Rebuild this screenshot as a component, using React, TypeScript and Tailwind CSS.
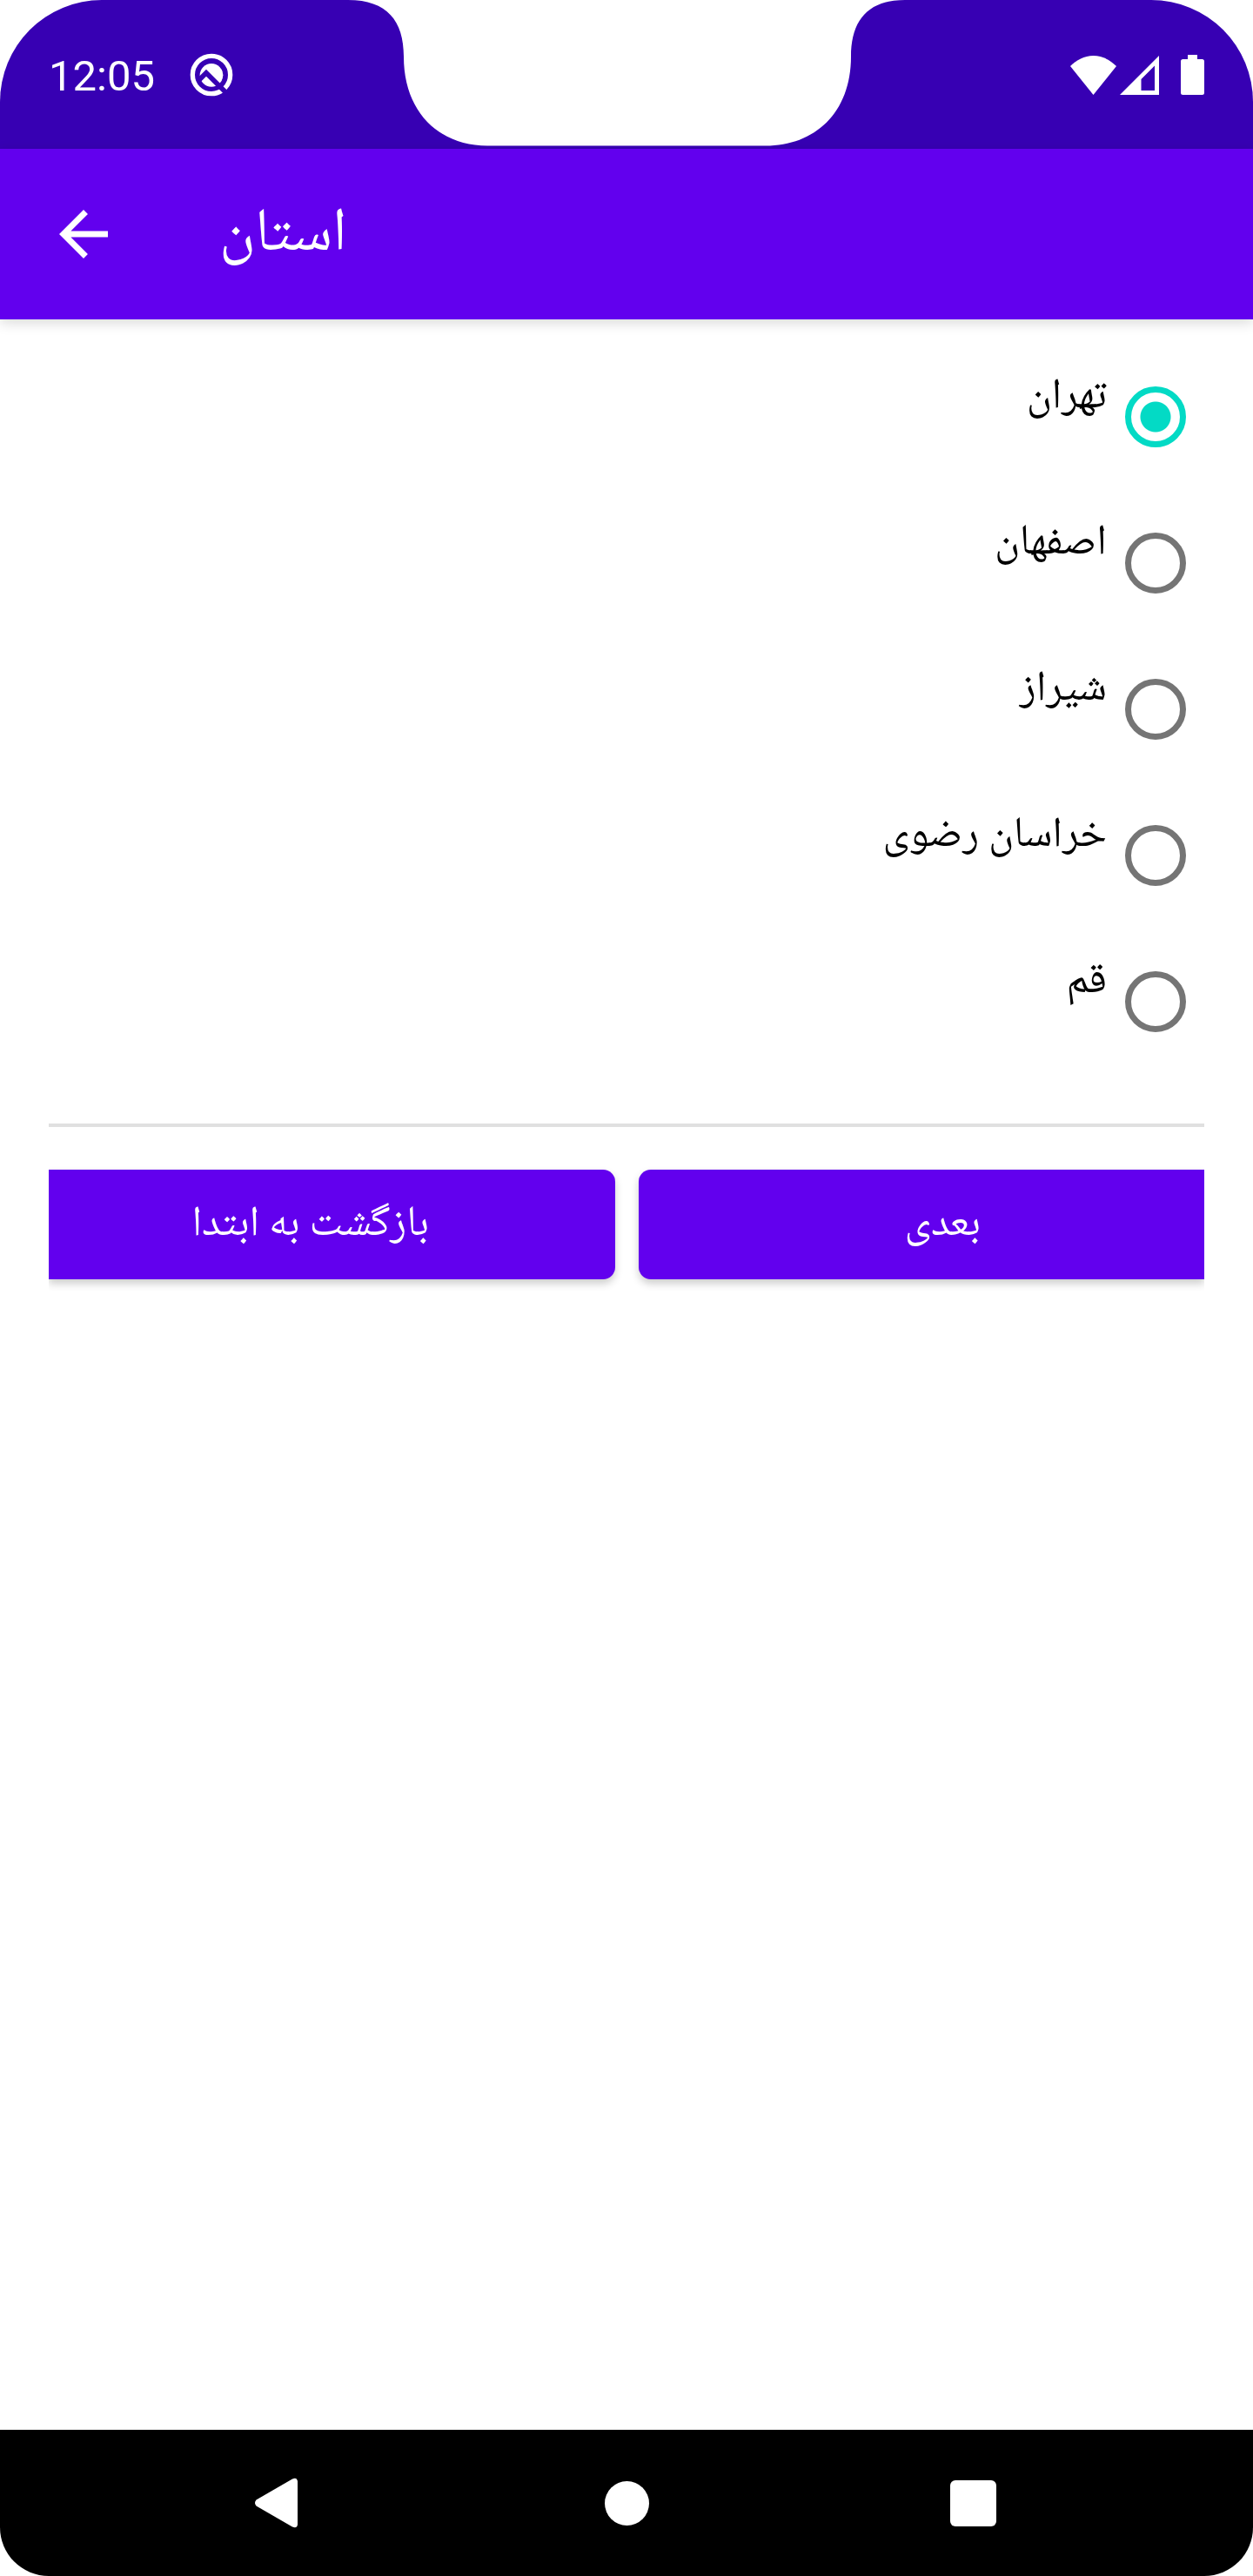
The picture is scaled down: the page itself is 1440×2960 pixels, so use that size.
import { useState } from 'react';

const PROVINCES = ['تهران', 'اصفهان', 'شیراز', 'خراسان رضوی', 'قم'];

function DebugIcon() {
  return (
    <svg className="size-[50px]" viewBox="0 0 150 150" fill="none" aria-hidden="true">
      <circle cx="75" cy="75" r="65" stroke="#fff" strokeWidth="16" />
      <circle cx="75" cy="76" r="40" fill="#fff" />
      <path d="M30 95 57 68 130 141" stroke="#3700b3" strokeWidth="17" />
    </svg>
  );
}

function StatusIcons() {
  return (
    <div className="flex items-end">
      <svg className="h-[45px] w-[53px]" viewBox="0 0 53 45" fill="#fff" aria-hidden="true">
        <path d="M0 12C7 5 16 0 26.500 0S46 5 53 12L26.500 45Z" />
      </svg>
      <svg className="ml-[4px] h-[45px] w-[45px]" viewBox="0 0 45 45" fill="#fff" aria-hidden="true">
        <path fillRule="evenodd" d="M0 45 45 0V45ZM24.500 27V40H40V11.500Z" />
      </svg>
      <svg className="ml-[25px] h-[46px] w-[27px]" viewBox="0 0 27 46" fill="#fff" aria-hidden="true">
        <path d="M8 0H19V5H24.500Q27 5 27 7.500V43.500Q27 46 24.500 46H2.500Q0 46 0 43.500V7.500Q0 5 2.500 5H8Z" />
      </svg>
    </div>
  );
}

function StatusBar() {
  return (
    <div className="relative flex h-[171px] items-center justify-between rounded-t-[117px] bg-[#3700b3] px-[56px]">
      <div className="flex items-center gap-[40px]">
        <span className="pt-[4px] font-['Roboto',sans-serif] text-[49px] leading-[56px] text-white">12:05</span>
        <DebugIcon />
      </div>
      <svg
        className="absolute top-0 left-1/2 h-[168px] w-[640px] -translate-x-1/2"
        viewBox="0 0 640 168"
        fill="#fff"
        aria-hidden="true"
      >
        <path d="M0 0C45 0 64 24 64 65C64 130 106 167.500 160 167.500H480C536 167.500 578 130 578 65C578 24 597 0 640 0Z" />
      </svg>
      <StatusIcons />
    </div>
  );
}

function AppBar() {
  return (
    <header className="z-10 flex h-[196px] items-center bg-[#6200ee] px-[54px] shadow-[0_4px_14px_rgba(0,0,0,0.15)]">
      <button type="button" aria-label="بازگشت" className="size-[84px]">
        <svg className="size-full" viewBox="0 0 24 24" fill="#fff" aria-hidden="true">
          <path d="M20 11H7.830l5.590-5.590L12 4l-8 8 8 8 1.410-1.410L7.830 13H20z" />
        </svg>
      </button>
      <h1 className="ml-[114px] text-[70px] leading-[112px] text-white">استان</h1>
    </header>
  );
}

function ProvinceOption({ name, checked, onSelect }: { name: string; checked: boolean; onSelect: () => void }) {
  return (
    <label className="flex h-[168px] items-center gap-[21px] pr-[21px]">
      <input
        type="radio"
        name="province"
        value={name}
        checked={checked}
        onChange={onSelect}
        className="size-[70px] shrink-0 appearance-none rounded-full border-[7px] border-[#757575] checked:border-[#03dac5] checked:bg-[radial-gradient(circle,#03dac5_17px,transparent_18px)]"
      />
      <span className="pb-[46px] text-[49px] leading-[84px] text-black">{name}</span>
    </label>
  );
}

function NavBar() {
  return (
    <nav className="flex h-[168px] items-center justify-between rounded-b-[56px] bg-black px-[280px]">
      <button type="button" aria-label="Back" className="size-[84px]">
        <svg className="size-full" viewBox="0 0 84 84" fill="#fff" aria-hidden="true">
          <path d="M56 14.500Q61 12 62 17V67Q61 72 56 69.500L14.500 45.500Q11.500 42 14.500 38.500Z" />
        </svg>
      </button>
      <button type="button" aria-label="Home" className="flex size-[84px] items-center justify-center">
        <span className="size-[51px] rounded-full bg-white" />
      </button>
      <button type="button" aria-label="Recents" className="flex size-[84px] items-center justify-center">
        <span className="size-[53px] rounded-[6px] bg-white" />
      </button>
    </nav>
  );
}

export default function App() {
  const [selected, setSelected] = useState(PROVINCES[0]);

  return (
    <div className="flex min-h-screen flex-col bg-white font-['Noto_Naskh_Arabic_UI','Noto_Naskh_Arabic',serif]">
      <StatusBar />
      <AppBar />
      <main dir="rtl" className="flex-1 px-[56px] pt-[28px]">
        <div role="radiogroup" aria-label="استان">
          {PROVINCES.map((name) => (
            <ProvinceOption key={name} name={name} checked={selected === name} onSelect={() => setSelected(name)} />
          ))}
        </div>
        <hr className="mt-[56px] border-t-4 border-[#e0e0e0]" />
        <div className="grid grid-cols-2 gap-[27px] overflow-x-clip pt-[49px] text-[49px] leading-[84px] text-white">
          <button
            type="button"
            className="h-[126px] rounded-l-[14px] bg-[#6200ee] pl-[49px] shadow-[0_5px_10px_rgba(0,0,0,0.2)]"
          >
            بعدی
          </button>
          <button
            type="button"
            className="h-[126px] rounded-r-[14px] bg-[#6200ee] pr-[49px] shadow-[0_5px_10px_rgba(0,0,0,0.2)]"
          >
            بازگشت به ابتدا
          </button>
        </div>
      </main>
      <NavBar />
    </div>
  );
}
